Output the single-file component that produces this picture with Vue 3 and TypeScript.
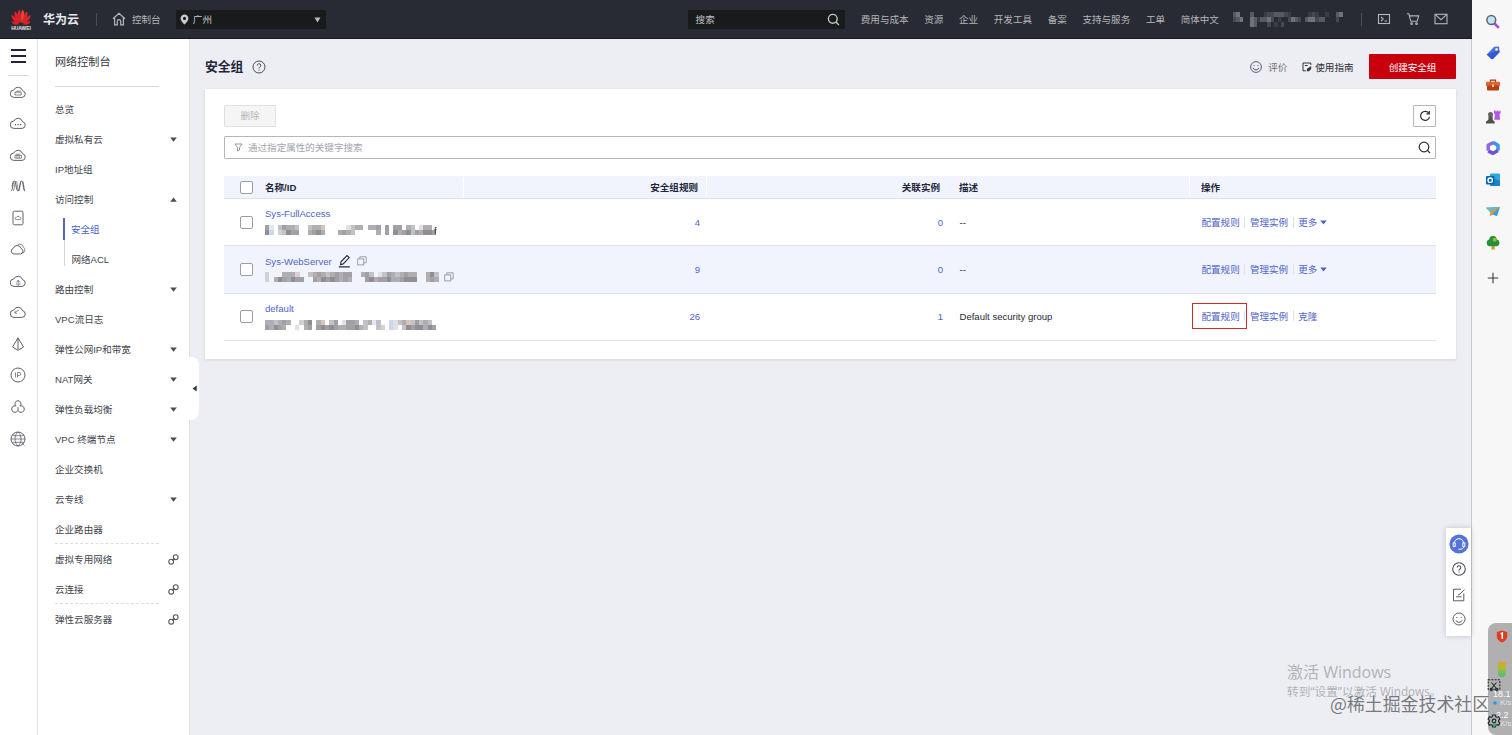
<script setup lang="ts">
interface NavItem {
  label: string
  mark?: 'down' | 'up' | 'link'
  sub?: boolean
  active?: boolean
  dashed?: boolean
}

interface GroupRow {
  name: string
  rules: number
  instances: number
  desc: string
  hover?: boolean
  last: string
  more?: boolean
  boxed?: boolean
  mosaic: string[]
}

const topLinks = ['费用与成本', '资源', '企业', '开发工具', '备案', '支持与服务', '工单', '简体中文']

const cloud = 'M4.1 13.400h8a3.400 3.400 0 0 0 .5-6.700A4.700 4.700 0 0 0 3.800 6a3.700 3.700 0 0 0 .3 7.400z'
const railIcons: string[][] = [
  [cloud, 'M5 8.2h6.2v2.8H5zM5.6 8.2l1-1h4.2'],
  [cloud, 'M4.9 9.6h1.2M7.5 9.6h1.2M10.1 9.6h1.2'],
  [cloud, 'M5 8.4h6.4v2.8H5zM7 8.4v2.8M9.2 8.4v2.8M5.6 7.2h4.6'],
  ['M1 13c2 0 1.5-10 3.3-10S6 13 8 13s1.700-10 3.600-10S13 13 15 13', 'M3 13c1.500 0 1.500-10 3-10s1.500 10 2.600 10S10 3 11 3', 'M1.800 8.500L3.200 3.500M13 3.500l1.600 9'],
  ['M4.500 1.200h7a1.500 1.500 0 0 1 1.500 1.500v10.600a1.500 1.500 0 0 1-1.500 1.500h-7A1.500 1.500 0 0 1 3 13.300V2.700a1.500 1.500 0 0 1 1.500-1.500z', 'M6.300 9.600h3.600a1.100 1.100 0 0 0 0-2.200 2 2 0 0 0-3.600 0 1.100 1.100 0 0 0 0 2.200z'],
  ['M3.800 13h6.800a2.900 2.900 0 0 0 .4-5.600 4 4 0 0 0-7.600-.2A3 3 0 0 0 3.800 13z', 'M7.500 3.800a3.700 3.700 0 0 1 5.800 2.300 3.300 3.300 0 0 1-.8 6'],
  [cloud, 'M8.200 13V8M6.400 9.400L8.200 7l1.800 2.400M6 11h1.500M9 11h1.500'],
  [cloud, 'M5 8.800a4.500 4.500 0 0 1 4-2.300M5 7v2.200h2'],
  ['M8 1.500v12M8 2L2.500 11l4 2.500M8 2l5.500 9-4 2.500M6 12.500l2 2 2-2'],
  ['M8 1a7 7 0 1 0 0 14A7 7 0 0 0 8 1z', 'M5.500 5.500v5M7.500 10.500v-5h1.800a1.500 1.500 0 0 1 0 3H7.500'],
  ['M8 1.700a3 3 0 0 0-2 5.200M8 1.700a3 3 0 0 1 2 5.200M6 6.900a3.300 3.300 0 1 0 2 4.500M10 6.900a3.300 3.300 0 1 1-2 4.500M8 8.200v3'],
  ['M8 1a7 7 0 1 0 0 14A7 7 0 0 0 8 1z', 'M8 1c-4 3-4 11 0 14M8 1c4 3 4 11 0 14M1 8h14M2.200 4.700h11.600M2.200 11.300h11.600M11.500 11.500l3 3'],
]

const nav: NavItem[] = [
  { label: '总览' },
  { label: '虚拟私有云', mark: 'down' },
  { label: 'IP地址组' },
  { label: '访问控制', mark: 'up' },
  { label: '安全组', sub: true, active: true },
  { label: '网络ACL', sub: true },
  { label: '路由控制', mark: 'down' },
  { label: 'VPC流日志' },
  { label: '弹性公网IP和带宽', mark: 'down' },
  { label: 'NAT网关', mark: 'down' },
  { label: '弹性负载均衡', mark: 'down' },
  { label: 'VPC 终端节点', mark: 'down' },
  { label: '企业交换机' },
  { label: '云专线', mark: 'down' },
  { label: '企业路由器', dashed: true },
  { label: '虚拟专用网络', mark: 'link' },
  { label: '云连接', mark: 'link', dashed: true },
  { label: '弹性云服务器', mark: 'link' },
]

// Each digit is the darkness of one mosaic cell; 0 is empty.
const rows: GroupRow[] = [
  {
    name: 'Sys-FullAccess', rules: 4, instances: 0, desc: '--', last: '更多', more: true,
    mosaic: ['5103554300344300000134404550505504301440', '6202365500456500055430000040506456354665'],
  },
  {
    name: 'Sys-WebServer', rules: 9, instances: 0, desc: '--', last: '更多', more: true, hover: true,
    mosaic: ['2000454200345434545500453013543454400463', '2046556550054656545400056455654566600454'],
  },
  {
    name: 'default', rules: 26, instances: 1, desc: 'Default security group', last: '克隆', boxed: true,
    mosaic: ['4534550024604303501555034130021343353430', '5565400104505656554556430032021036566565'],
  },
]
const account = ['034000300012233321000001210010034', '023400431334201002432034423300020', '000000430002010200000000000000000']
const shades = ['transparent', '#e1e1e5', '#d3d1d3', '#c0c2c8', '#b2aeb0', '#a1a1a5', '#8f8e96']
const tints = ['transparent', '#dfe8f2', '#ccdae8', '#d5c7bd', '#b2aeb0', '#aaaeb7', '#938d93']
const darks = ['transparent', '#3b3e46', '#4a4d55', '#5d6067', '#777a80']

function cellColor(digit: string, index: number): string {
  return (index % 4 === 1 ? tints : shades)[Number(digit)]
}
</script>

<template>
  <div class="screen">
    <div class="console">
      <header class="top">
        <div class="logo">
          <svg width="22" height="16" viewBox="0 0 22 16">
            <g fill="#d9232c">
              <path d="M10.600 14C7 10 6.500 3 9.500.4c1.600 2 1.800 8 1.100 13.600z" />
              <path d="M11.400 14c3.600-4 4.100-11 1.100-13.600-1.600 2-1.800 8-1.100 13.600z" fill="#ee4038" />
              <path d="M9.900 14.200C5.500 11.500 3.500 6.500 4.900 2.400c2.400.9 4.500 6.600 5 11.800z" />
              <path d="M12.100 14.200c4.400-2.700 6.400-7.700 5-11.800-2.400.9-4.500 6.600-5 11.800z" />
              <path d="M9.300 14.600C4.500 13.700 1.400 10 1.500 6c2.700.7 6.300 4.600 7.800 8.600z" />
              <path d="M12.700 14.600c4.800-.9 7.900-4.600 7.800-8.600-2.700.7-6.300 4.600-7.800 8.600z" />
              <path d="M9 15.200c-3.200 1.200-6.300.2-7.400-2.800 2.500-.3 5.400 1.300 7.400 2.800zM13 15.200c3.200 1.200 6.300.2 7.400-2.800-2.500-.3-5.400 1.300-7.400 2.800z" />
            </g>
          </svg>
          <span>HUAWEI</span>
        </div>
        <b class="brand">华为云</b>
        <i class="bar"></i>
        <svg class="home" width="14" height="14" viewBox="0 0 14 14" fill="none" stroke="#b4b6ba" stroke-width="1.200">
          <path d="M1 6.800L7 1.300l6 5.500M2.600 5.800v7h2.700V9.300a1.700 1.700 0 0 1 3.400 0v3.500h2.700v-7" />
        </svg>
        <span class="crumb">控制台</span>
        <div class="region">
          <svg width="9" height="11" viewBox="0 0 9 11"><path fill="#c9cacc" fill-rule="evenodd" d="M4.500.5a3.900 3.900 0 0 0-3.900 4c0 2.500 3.900 6 3.900 6s3.900-3.500 3.900-6a3.900 3.900 0 0 0-3.900-4zm0 2.300a1.600 1.600 0 1 1 0 3.200 1.600 1.600 0 0 1 0-3.200z" /></svg>
          <span>广州</span>
          <svg class="end" width="7" height="6" viewBox="0 0 7 6"><path d="M.5.500h6L3.500 5.500z" fill="#b9babd" /></svg>
        </div>
        <div class="search">
          <span>搜索</span>
          <svg width="13" height="13" viewBox="0 0 13 13" fill="none" stroke="#c3c4c6" stroke-width="1.400"><circle cx="5.800" cy="5.800" r="4.400" /><path d="M9 9l2.900 2.900" /></svg>
        </div>
        <nav class="links"><span v-for="t in topLinks" :key="t">{{ t }}</span></nav>
        <div class="account">
          <div v-for="(line, r) in account" :key="r" class="mline">
            <i v-for="(d, c) in line.split('')" :key="c" :style="{ background: darks[Number(d)] }"></i>
          </div>
        </div>
        <i class="bar second"></i>
        <div class="tools">
          <svg width="14" height="14" viewBox="0 0 14 14" fill="none" stroke="#b4b6ba" stroke-width="1.100"><rect x="1.500" y="2.500" width="11" height="9" /><path d="M4 5l2.200 2L4 9M7.500 9h2.600" /></svg>
          <svg width="14" height="14" viewBox="0 0 14 14" fill="none" stroke="#b4b6ba" stroke-width="1.100"><path d="M.8 1.800h2l2.100 7.500h6.200l1.600-5.400H3.500" /><circle cx="5.600" cy="11.700" r=".8" /><circle cx="10.500" cy="11.700" r=".8" /></svg>
          <svg width="14" height="14" viewBox="0 0 14 14" fill="none" stroke="#b4b6ba" stroke-width="1.100"><rect x="1" y="2.300" width="12" height="9.400" /><path d="M1.300 2.700L7 7.700l5.700-5" /></svg>
        </div>
      </header>

      <div class="body">
        <aside class="rail">
          <div class="burger"><i></i><i></i><i></i></div>
          <svg v-for="(paths, i) in railIcons" :key="i" width="16" height="16" viewBox="0 0 16 16" fill="none" stroke="#555862" stroke-width=".9">
            <path v-for="(p, j) in paths" :key="j" :d="p" :stroke-width="i === 1 && j === 1 ? 1.4 : j > 0 ? 0.7 : 0.95" />
          </svg>
        </aside>

        <aside class="nav">
          <div class="nav-title">网络控制台</div>
          <div v-for="n in nav" :key="n.label" class="item" :class="{ sub: n.sub, active: n.active, dashed: n.dashed }">
            <span>{{ n.label }}</span>
            <svg v-if="n.mark === 'down'" width="7" height="5" viewBox="0 0 7 5"><path d="M.2.500h6.600L3.500 4.800z" fill="#4a4d55" /></svg>
            <svg v-else-if="n.mark === 'up'" width="7" height="5" viewBox="0 0 7 5"><path d="M.2 4.700h6.600L3.500.400z" fill="#4a4d55" /></svg>
            <svg v-else-if="n.mark === 'link'" class="chain" width="11" height="11" viewBox="0 0 11 11" fill="none" stroke="#555862" stroke-width="1.100"><circle cx="3.200" cy="7.700" r="2.400" /><circle cx="7.700" cy="3.200" r="2.400" /><path d="M4.200 6.700l2.500-2.500" /></svg>
          </div>
          <div class="handle"><svg width="5" height="7" viewBox="0 0 5 7"><path d="M4.700.5v6L.5 3.500z" fill="#33363f" /></svg></div>
        </aside>

        <main class="main">
          <div class="heading">
            <h1>安全组</h1>
            <svg width="14" height="14" viewBox="0 0 14 14" fill="none" stroke="#4a4d58"><circle cx="7" cy="7" r="6" /><path d="M5.200 5.600a1.800 1.800 0 1 1 2.500 1.600c-.5.200-.7.500-.7 1.200M7 9.600v1" /></svg>
            <div class="spacer"></div>
            <svg width="12" height="12" viewBox="0 0 12 12" fill="none" stroke="#4a4d58" stroke-width=".9"><circle cx="6" cy="6" r="5.400" /><path d="M3.200 6.800a2.900 2.900 0 0 0 5.600 0M4 4v1M8 4v1" /></svg>
            <span class="rate">评价</span>
            <svg width="10" height="10" viewBox="0 0 10 10" fill="none" stroke="#33363f"><path d="M8.800 3V1H1v7.800h2.800M2.800 3.500h3" /><path d="M9.200 4v3L7 9.200H4.700L5 6.800z" fill="#33363f" stroke="none" /></svg>
            <span class="guide">使用指南</span>
            <button class="create">创建安全组</button>
          </div>

          <section class="card">
            <div class="actions">
              <button class="delete">删除</button>
              <button class="refresh"><svg width="12" height="12" viewBox="0 0 12 12" fill="none" stroke="#2a2d36" stroke-width="1.200"><path d="M10 3.600A4.500 4.500 0 1 0 10.500 6.800" /><path d="M10.300 1v2.900H7.500" /></svg></button>
            </div>
            <div class="filter">
              <svg width="9" height="9" viewBox="0 0 9 9" fill="none" stroke="#8b8e96" stroke-width=".9"><path d="M.9 1h7.200L5.500 4.400V7L3.500 8V4.400z" /></svg>
              <span>通过指定属性的关键字搜索</span>
              <svg class="end" width="13" height="13" viewBox="0 0 13 13" fill="none" stroke="#2a2d36" stroke-width="1.200"><circle cx="6" cy="6" r="4.800" /><path d="M9.400 9.400l2.600 2.600" /></svg>
            </div>

            <div class="table">
              <div class="tr th">
                <div class="check"><i class="box"></i></div>
                <div class="sep">名称/ID</div>
                <div class="num sep">安全组规则</div>
                <div class="num">关联实例</div>
                <div class="desc sep">描述</div>
                <div class="ops">操作</div>
              </div>
              <div v-for="row in rows" :key="row.name" class="tr" :class="{ hover: row.hover }">
                <div class="check"><i class="box"></i></div>
                <div class="name">
                  <div class="line">
                    <a>{{ row.name }}</a>
                    <template v-if="row.hover">
                      <svg class="pen" width="13" height="14" viewBox="0 0 13 14" fill="none" stroke="#2a2d36" stroke-width="1.100"><path d="M2.500 10.700l.5-2.900 6-6.200 2.200 2-6 6.300zM.8 12.900h11" /></svg>
                      <svg class="copy" width="10" height="10" viewBox="0 0 10 10" fill="none" stroke="#9396a3" stroke-width=".9"><rect x=".7" y="2.900" width="6" height="6" /><path d="M2.800 2.800V.8h6.400v6H6.900" /></svg>
                    </template>
                  </div>
                  <div class="line id">
                    <div class="mosaic" :class="{ compact: row.hover }">
                      <div v-for="(m, r) in row.mosaic" :key="r" class="mline">
                        <i v-for="(d, c) in m.split('')" :key="c" :style="{ background: cellColor(d, c) }"></i>
                      </div>
                    </div>
                    <span v-if="row.rules === 4" class="tail">f</span>
                    <svg v-if="row.hover" width="10" height="10" viewBox="0 0 10 10" fill="none" stroke="#9396a3" stroke-width=".9"><rect x=".7" y="2.900" width="6" height="6" /><path d="M2.800 2.800V.8h6.400v6H6.900" /></svg>
                  </div>
                </div>
                <div class="num"><a>{{ row.rules }}</a></div>
                <div class="num"><a>{{ row.instances }}</a></div>
                <div class="desc">{{ row.desc }}</div>
                <div class="ops" :class="{ raised: row.boxed }">
                  <a :class="{ boxed: row.boxed }">配置规则</a><i></i><a>管理实例</a><i></i><a>{{ row.last }}</a>
                  <svg v-if="row.more" width="7" height="5" viewBox="0 0 7 5"><path d="M.3.500h6.400L3.500 4.500z" fill="#4a62c8" /></svg>
                </div>
              </div>
            </div>
          </section>

          <div class="dock">
            <svg width="20" height="20" viewBox="0 0 20 20" fill="none"><circle cx="10" cy="10" r="9.600" fill="#5573d9" /><path d="M5.400 9.300a4.600 4.600 0 0 1 9.200 0M5.400 8.800H4.200v3.800h2V8.800zM14.600 8.800h1.200v3.800h-2V8.800zM14.600 12.600c0 1.800-1.500 2.600-3.600 2.600H9.500" stroke="#fff" stroke-width="1" /></svg>
            <svg width="14" height="14" viewBox="0 0 14 14" fill="none" stroke="#4a4d58" stroke-width="1.100"><circle cx="7" cy="7" r="6.300" /><path d="M5.200 5.600a1.800 1.800 0 1 1 2.500 1.600c-.5.200-.7.500-.7 1.200M7 9.600v1" /></svg>
            <svg width="14" height="14" viewBox="0 0 14 14" fill="none" stroke="#4a4d58" stroke-width=".9"><path d="M9 1.200H1.500v11.600h10.300V5.500M4 8.800h5.500M6 6.800l1 .1 5.500-5.200" /></svg>
            <svg width="14" height="14" viewBox="0 0 14 14" fill="none" stroke="#4a4d58" stroke-width=".9"><path d="M12.300 4.200A6 6 0 1 0 12.300 9.800l.9-2.800z" /><path d="M4 8.300a3.200 3.200 0 0 0 6 0M4.800 5v1M9.200 5v1" /></svg>
          </div>
        </main>
      </div>
    </div>

    <aside class="edge">
      <svg viewBox="0 0 16 16"><path d="M9.500 9.500l4.300 4.300" stroke="#b746dc" stroke-width="2.600" /><circle cx="6.300" cy="6" r="4.400" fill="#bfe3f7" stroke="#5f6670" stroke-width="1.500" /></svg>
      <svg viewBox="0 0 16 16"><path d="M9.200 1.800L14 1.500l.5 5.700-6.300 6.600a1.500 1.500 0 0 1-2 0L1.700 9.400z" fill="#4673e6" /><path d="M1.700 9.400l4.500 4.400a1.500 1.500 0 0 0 2 0l6.300-6.600-.2-2z" fill="#3857cf" /><circle cx="11.600" cy="4.500" r="1.400" fill="#f7e48b" /></svg>
      <svg viewBox="0 0 16 16"><path d="M5.500 5V3.200h5V5" fill="none" stroke="#9a401d" stroke-width="1.300" /><rect x="1" y="4.700" width="14" height="4.500" rx="1" fill="#e0652a" /><rect x="2" y="8.500" width="12" height="5" rx=".8" fill="#b53f16" /><rect x="7" y="7.500" width="2" height="2.500" fill="#ffdc9a" /></svg>
      <svg viewBox="0 0 16 16"><path d="M9 1.500h1.500v1h1.200v-1h1.500v1h1.300v-1H15.500v3l-1 .8.500 5.500H9.300l.6-5.500-.9-.8z" fill="#b653e8" /><circle cx="5.500" cy="5.500" r="2.500" fill="#64655f" /><path d="M3.600 7.200h3.900l.3 3.800 1.800 1.600v2H1v-2L3.300 11z" fill="#4f504c" /></svg>
      <svg viewBox="0 0 16 16"><path d="M8 2.400L13 5.200v5.300" fill="none" stroke="#369be8" stroke-width="3.600" stroke-linejoin="round" /><path d="M13 10.500L8 13.300 3.300 10.800" fill="none" stroke="#7155cf" stroke-width="3.600" stroke-linejoin="round" /><path d="M3.200 10.800V5.200L8.300 2.400" fill="none" stroke="#8d68dc" stroke-width="3.400" stroke-linejoin="round" /></svg>
      <svg viewBox="0 0 16 16"><rect x="5" y="1.500" width="10" height="12.500" rx="1" fill="#32a5e6" /><path d="M10 7l5 1.500V14H5z" fill="#1683cd" /><rect x="1" y="4" width="8.500" height="8.500" rx="1" fill="#0967b5" /><circle cx="5.200" cy="8.200" r="2.200" fill="none" stroke="#fff" stroke-width="1.300" /></svg>
      <svg viewBox="0 0 16 16"><path d="M1 3.800l14-.9-3 9.300-4.300-1.700-2.200 1.500-.6-4.200z" fill="#2f9fe2" /><path d="M1 3.800l14-.9L4.900 7.800z" fill="#6ab9cf" /><path d="M4.900 7.800L15 2.900 7.700 9.800l-2.200 2.400z" fill="#e69a2e" /></svg>
      <svg viewBox="0 0 16 16"><path d="M6.800 9h2.600l.5 5.500H6.300z" fill="#d99625" /><path d="M8 1a3.600 3.600 0 0 1 3.700 3.200A3.700 3.700 0 0 1 12 11.300H4A3.700 3.700 0 0 1 4.300 4.300 3.600 3.600 0 0 1 8 1z" fill="#23913a" /><circle cx="9.700" cy="4.700" r="2" fill="#92bf35" /></svg>
      <svg class="plus" viewBox="0 0 16 16"><path d="M8 2.800v10.400M2.800 8h10.400" stroke="#3b3b3d" stroke-width="1.100" /></svg>
    </aside>

    <div class="monitor">
      <svg class="shield" width="12" height="13" viewBox="0 0 12 13"><path d="M6 .5l5.200 1.600v4.200c0 3-2.300 5.100-5.200 6.200C3.100 11.400.8 9.300.8 6.300V2.100z" fill="#e23b22" /><path d="M4.700 4l1.600-1v6" fill="none" stroke="#fff" stroke-width="1.500" /></svg>
      <i class="level"></i>
      <span>18.1</span><small>K/s</small>
      <span class="low">2.2</span><small>K/s</small>
      <svg class="spark" width="10" height="6" viewBox="0 0 10 6"><path d="M0 3h10" stroke="#7db6d9" /><circle cx="5" cy="3" r="1.700" fill="#1b9be8" /></svg>
    </div>
    <svg class="snip" width="14" height="14" viewBox="0 0 14 14" fill="none" stroke="#27292c" stroke-width="1.100"><rect x="1.200" y="1.800" width="11.600" height="9.500" stroke-dasharray="2 1.200" /><path d="M4.500 4.500l5 6M9.500 4.500l-5 6" /><circle cx="4.300" cy="11.500" r="1.100" /><circle cx="9.700" cy="11.500" r="1.100" /></svg>
    <svg class="gear" width="14" height="14" viewBox="0 0 14 14" fill="none" stroke="#27292c" stroke-width="1.200"><path d="M5.700 1h2.600l.4 1.700 1.200.7 1.700-.6 1.300 2.300L11.600 6.300v1.400l1.300 1.200-1.300 2.300-1.700-.6-1.200.7L8.300 13H5.700l-.4-1.700-1.200-.7-1.700.6-1.300-2.300 1.300-1.200V6.300L1.100 5.100l1.300-2.300 1.700.6 1.200-.7z" /><circle cx="7" cy="7" r="1.800" /><circle cx="7.700" cy="10.700" r="1.600" fill="#23b573" stroke="none" /></svg>

    <div class="activate"><p>激活 Windows</p><p class="small">转到“设置”以激活 Windows。</p></div>
    <div class="mark">@稀土掘金技术社区</div>
  </div>
</template>

<style>
body { margin: 0; overflow: hidden; }
</style>

<style scoped>
.screen { position: relative; display: flex; width: 1512px; height: 735px; overflow: hidden; background: #f7f7f8; font-family: "Liberation Sans", "Noto Sans CJK SC", sans-serif; font-size: 9.550px; color: #41444d; white-space: nowrap; }
.screen *, .screen *::after { box-sizing: border-box; }
svg { display: block; flex: none; }
i { display: block; flex: none; }
button { padding: 0; font: inherit; }
.console { display: flex; flex-direction: column; width: 1472px; border-right: 1px solid #c9cacf; }
.top { display: flex; align-items: center; width: 1472px; height: 39px; padding: 0 24px 0 10px; background: #282b33; border-bottom: 1px solid #17191d; color: #b4b6ba; flex: none; }
.logo { width: 22px; display: flex; flex-direction: column; align-items: center; padding-top: 1px; }
.logo span { font-size: 6px; line-height: 6px; font-weight: 700; color: #e8e8e8; transform: scaleX(.82); }
.brand { width: 37px; margin-left: 11px; font-size: 12px; line-height: 18px; color: #e8e9eb; padding-top: 1px; }
.bar { width: 1px; height: 13px; background: #4b4e56; margin-left: 16px; }
.home { margin-left: 15px; }
.crumb { width: 29px; margin-left: 6px; }
.region { display: flex; align-items: center; width: 150px; height: 19px; margin-left: 15px; padding: 0 5px 0 4px; background: #181a1c; color: #c9cacc; }
.region span { margin-left: 4px; }
.region .end { position: relative; top: 1px; }
.end { margin-left: auto; }
.search { display: flex; align-items: center; justify-content: space-between; width: 158px; height: 19px; margin-left: 362px; padding: 0 5px 0 8px; background: #181a1c; color: #c3c4c6; }
.links { display: flex; gap: 15.700px; margin-left: 15.500px; width: 371.500px; }
.account { width: 113px; opacity: .9; margin-top: 1px; margin-left: -2px; margin-right: 2px; }
.mline { display: flex; }
.mline i { flex: 1; height: 5px; }
.bar.second { margin-left: 17px; }
.tools { display: flex; gap: 14.300px; margin-left: 15px; }
.body { display: flex; flex: 1; min-height: 0; }
.rail { width: 38px; border-right: 1px solid #dfe0e5; background: #fff; display: flex; flex-direction: column; align-items: center; gap: 15.550px; flex: none; padding-right: 1px; }
.burger { width: 21px; height: 37px; margin-bottom: -8px; padding: 10px 3px 0; display: flex; flex-direction: column; gap: 4px; border-bottom: 1px solid #dcdde1; }
.burger i { height: 2px; background: #22253a; }
.nav { position: relative; width: 152px; background: #fff; border-right: 1px solid #dfe0e5; padding-left: 17px; flex: none; z-index: 1; }
.nav-title { width: 104px; height: 48px; line-height: 47px; font-size: 11.100px; border-bottom: 1px solid #d7d8dc; margin-bottom: 7px; color: #353842; }
.item { height: 30px; line-height: 28px; display: flex; align-items: center; justify-content: space-between; padding-right: 12px; position: relative; }
.item span { padding-top: 1.500px; }
.item .chain { margin-right: -1.500px; }
.item.sub { height: 22px; line-height: 20px; margin: 4px 0 0 8px; padding-left: 7px; border-left: 1px solid #d3d5dc; }
.item.sub.active { border-left: 2px solid #5268cb; padding-left: 6px; color: #4a60cc; }
.item.sub:not(.active) { height: 26px; margin: 0 0 8px 9px; padding-left: 6.500px; }
.item.sub:not(.active) span { padding-top: 13px; }
.dashed::after { content: ""; position: absolute; left: 0; bottom: 0; width: 104px; border-bottom: 1px dashed #dcdde1; }
.handle { position: absolute; left: 151px; top: 318px; width: 10px; height: 63px; background: #fff; border-radius: 0 8px 8px 0; display: flex; align-items: center; justify-content: center; }
.main { position: relative; flex: 1; background: #edeef3; padding: 0 15px; }
.heading { height: 50px; padding-top: 5px; display: flex; align-items: center; }
.heading h1 { margin: 0 9px 0 0; font-size: 12.800px; line-height: 20px; color: #22253a; width: 38px; }
.spacer { flex: 1; }
.rate { margin: 0 15px 0 6px; color: #6c6f78; }
.guide { margin: 0 15.500px 0 3px; color: #2a2d36; }
.create { width: 87px; height: 25px; background: #c7000b; color: #fff; border: 0; border-radius: 1px; }
.card { height: 270px; background: #fff; box-shadow: 0 1px 3px rgba(40, 45, 70, .13); padding: 16px 20px 0 19px; }
.actions { display: flex; justify-content: space-between; height: 22px; }
.delete { width: 52px; border: 1px solid #dfe0e5; background: #f5f5f6; color: #b5b7bd; border-radius: 1px; line-height: 18px; }
.refresh { width: 23px; border: 1px solid #b5b7bd; border-radius: 1px; background: #fff; display: flex; align-items: center; justify-content: center; }
.filter { display: flex; align-items: center; height: 23px; margin-top: 9px; border: 1px solid #b5b7bd; border-radius: 1px; padding: 0 4px 0 9px; color: #a2a5ad; }
.filter span { margin-left: 5px; padding-bottom: 1px; }
.table { margin-top: 17px; }
.tr { display: grid; grid-template-columns: 41px 199px 243px 243px 240px 1fr; height: 47.300px; align-items: center; border-bottom: 1px solid #dfe1e9; color: #272a33; }
.tr.hover { background: #f1f4fd; }
.th { height: 23px; background: #f1f4fd; font-weight: 700; color: #22253a; }
.th > div { line-height: 20px; height: 20px; padding-top: 1px; }
.sep { border-right: 1.500px solid #fff; }
.box { width: 13px; height: 13px; border: 1px solid #9b9da4; border-radius: 2px; background: #fff; }
.check { display: flex; align-items: center; padding-left: 15.500px; }
.th .check { padding-top: 0; }
.num { text-align: right; padding-right: 7px; }
.th .num { padding-right: 8px; }
.th .num:not(.sep) { padding-right: 10px; }
.desc { padding-left: 9.500px; }
.th .desc { padding-left: 9px; }
.ops { padding-left: 11.500px; display: flex; align-items: center; height: 100%; }
.th .ops { padding-left: 11px; }
.ops.raised { padding-bottom: 1.500px; }
.ops i { width: 1px; height: 11px; background: #dfe1e9; margin: 0 4.600px; }
.ops svg { margin-left: 3px; }
a { color: #4f64c9; position: relative; }
.boxed::after { content: ""; position: absolute; left: -10px; top: -6px; width: 55px; height: 26px; border: 1.500px solid #d02a2f; }
.line { display: flex; align-items: center; height: 16px; padding-bottom: 1.500px; }
.line.id { height: 15px; padding-bottom: 0; }
.pen { margin-left: 6px; }
.copy { margin-left: 6px; }
.mosaic { width: 171px; }
.mosaic.compact { width: 174px; margin-right: 5px; }
.tail { margin-left: -2px; }
.dock { position: absolute; right: 0; top: 489px; width: 25px; height: 108px; background: #fff; box-shadow: 0 0 5px rgba(40, 45, 70, .22); display: flex; flex-direction: column; align-items: center; padding-top: 6px; gap: 8px; }
.dock svg + svg + svg { margin-top: 4px; }
.dock svg + svg + svg + svg { margin-top: 2px; }
.edge { width: 40px; padding: 13.500px 0 0 2px; display: flex; flex-direction: column; align-items: center; gap: 15.700px; }
.edge svg { width: 16px; height: 16px; }
.edge .plus { margin-top: 2.500px; }
.monitor { position: absolute; left: 1488px; top: 623px; width: 32px; height: 112px; border-radius: 8px; background: #b0b0b1; color: #fff; font-size: 9px; line-height: 10px; }
.monitor > * { position: absolute; }
.shield { left: 8px; top: 7px; }
.level { left: 10px; top: 39px; width: 8px; height: 15px; border-radius: 1px 1px 4px 4px; background: linear-gradient(#e0a52c, #a9bb38 45%, #3cc287); }
.spark { left: 2px; top: 77px; }
.monitor span { left: 5px; top: 66px; }
.monitor small { left: 12px; top: 75px; font-size: 8px; color: #e4e4e4; }
.monitor .low { left: 8px; top: 87px; }
.monitor .low + small { top: 96px; }
.snip { position: absolute; left: 1487px; top: 678px; }
.gear { position: absolute; left: 1487px; top: 714px; }
.activate { position: absolute; left: 1287px; top: 661px; font-family: "Open Sans", "Noto Sans CJK SC", sans-serif; color: #b0b2b7; }
.activate p { margin: 0; font-size: 16px; line-height: 22px; }
.activate .small { font-size: 11.700px; line-height: 16px; }
.mark { position: absolute; left: 1330px; top: 691px; font-family: "Noto Sans CJK SC", sans-serif; font-size: 17.900px; line-height: 24px; color: #75777c; text-shadow: 0 0 1px #fff; }
</style>
